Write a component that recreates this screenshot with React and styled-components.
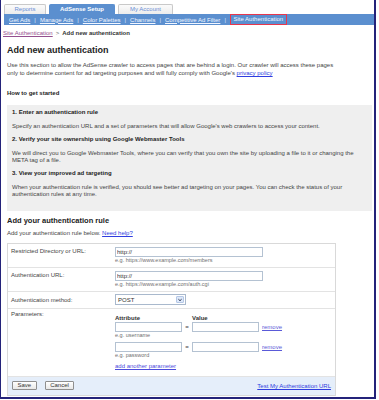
import React from 'react';
import styled, { createGlobalStyle } from 'styled-components';

const subNavItems = ['Get Ads', 'Manage Ads', 'Color Palettes', 'Channels', 'Competitive Ad Filter'];

const steps = [
  {
    title: '1. Enter an authentication rule',
    text: "Specify an authentication URL and a set of parameters that will allow Google's web crawlers to access your content.",
  },
  {
    title: '2. Verify your site ownership using Google Webmaster Tools',
    text: 'We will direct you to Google Webmaster Tools, where you can verify that you own the site by uploading a file to it or changing the META tag of a file.',
  },
  {
    title: '3. View your improved ad targeting',
    text: 'When your authentication rule is verified, you should see better ad targeting on your pages. You can check the status of your authentication rules at any time.',
  },
];

const params = [
  { hint: 'e.g. username' },
  { hint: 'e.g. password' },
];

const App = () => {
  return (
    <>
      <GlobalStyles />
      <Frame>
        <TabStrip>
          <Tab $w={42}>Reports</Tab>
          <Tab $w={66} $active>
            AdSense Setup
          </Tab>
          <Tab $w={55}>My Account</Tab>
        </TabStrip>
        <SubNav>
          {subNavItems.map((item) => (
            <React.Fragment key={item}>
              <SubLink href='#'>{item}</SubLink>
              <Sep>|</Sep>
            </React.Fragment>
          ))}
          <CurrentItem>Site Authentication</CurrentItem>
        </SubNav>

        <Breadcrumb>
          <CrumbLink href='#'>Site Authentication</CrumbLink>
          <CrumbSep>&gt;</CrumbSep>
          <CrumbCurrent>Add new authentication</CrumbCurrent>
        </Breadcrumb>

        <Main>
          <Title>Add new authentication</Title>
          <Intro>
            Use this section to allow the AdSense crawler to access pages that are behind a login.
            Our crawler will access these pages only to determine content for ad targeting purposes
            and will fully comply with Google's <Link href='#'>privacy policy</Link>
          </Intro>

          <SmallHeading>How to get started</SmallHeading>
          <StepsBox>
            {steps.map((step) => (
              <Step key={step.title}>
                <StepTitle>{step.title}</StepTitle>
                <StepText>{step.text}</StepText>
              </Step>
            ))}
          </StepsBox>

          <FormHeading>Add your authentication rule</FormHeading>
          <FormIntro>
            Add your authentication rule below. <Link href='#'>Need help?</Link>
          </FormIntro>

          <FormTable>
            <FormRow $pad={3.5}>
              <Label>Restricted Directory or URL:</Label>
              <Field>
                <TextInput $w={148} defaultValue='http://' />
                <Hint>e.g. https://www.example.com/members</Hint>
              </Field>
            </FormRow>
            <FormRow $pad={3.5}>
              <Label>Authentication URL:</Label>
              <Field>
                <TextInput $w={148} defaultValue='http://' />
                <Hint>e.g. https://www.example.com/auth.cgi</Hint>
              </Field>
            </FormRow>
            <FormRow $pad={2.5}>
              <Label $top={1.5}>Authentication method:</Label>
              <Field>
                <SelectBox>
                  <span>POST</span>
                  <SelectArrow>
                    <svg width='6' height='6' viewBox='0 0 6 6'>
                      <path d='M1.4 2.2 L3 3.7 L4.6 2.2' fill='none' stroke='#2a3550' strokeWidth='1' />
                    </svg>
                  </SelectArrow>
                </SelectBox>
              </Field>
            </FormRow>
            <FormRow $pad={2} $last>
              <Label>Parameters:</Label>
              <ParamField>
                <ParamGrid>
                  <ParamHead>Attribute</ParamHead>
                  <span />
                  <ParamHead>Value</ParamHead>
                  <span />
                  {params.map((p) => (
                    <React.Fragment key={p.hint}>
                      <ParamCell>
                        <TextInput $w={67} />
                        <Hint>{p.hint}</Hint>
                      </ParamCell>
                      <Eq>=</Eq>
                      <ParamCell>
                        <TextInput $w={67} />
                      </ParamCell>
                      <RemoveLink href='#'>remove</RemoveLink>
                    </React.Fragment>
                  ))}
                </ParamGrid>
                <AddLink href='#'>add another parameter</AddLink>
              </ParamField>
            </FormRow>
            <FormFooter>
              <Buttons>
                <Button>Save</Button>
                <Button>Cancel</Button>
              </Buttons>
              <Link href='#'>Test My Authentication URL</Link>
            </FormFooter>
          </FormTable>
        </Main>
      </Frame>
    </>
  );
};

const GlobalStyles = createGlobalStyle`
  html, body {
    margin: 0;
    padding: 0;
    background: #ffffff;
  }

  body {
    font-family: 'Liberation Sans', Arial, sans-serif;
    font-size: 6px;
    color: #444444;
  }
`;

const Frame = styled.div`
  box-sizing: border-box;
  width: 376px;
  height: 399px;
  border-left: 1px solid #24237a;
  border-right: 2px solid #24237a;
  border-bottom: 2px solid #24237a;
  overflow: hidden;
  background: #ffffff;
`;

const TabStrip = styled.div`
  display: flex;
  gap: 3px;
  padding: 4px 0 0 3px;
`;

const Tab = styled.div`
  box-sizing: border-box;
  width: ${(p) => p.$w}px;
  height: 10px;
  text-align: center;
  font-size: 6px;
  line-height: 9px;
  border-radius: 2px 2px 0 0;
  border: 1px solid ${(p) => (p.$active ? '#5b8fcf' : '#c9c9c9')};
  border-bottom: none;
  background: ${(p) => (p.$active ? '#5b8fcf' : 'linear-gradient(#fbfbfb, #ececec)')};
  color: ${(p) => (p.$active ? '#ffffff' : '#6b8fd6')};
  font-weight: ${(p) => (p.$active ? 'bold' : 'normal')};
`;

const SubNav = styled.div`
  display: flex;
  align-items: center;
  height: 11px;
  margin-left: 3px;
  padding-left: 5px;
  background: #5b8fcf;
  color: #eef3ff;
`;

const SubLink = styled.a`
  color: #f2f6ff;
  text-decoration: underline;
  white-space: nowrap;
`;

const Sep = styled.span`
  margin: 0 4px;
  color: #dfe8fb;
`;

const CurrentItem = styled.span`
  box-sizing: border-box;
  height: 11px;
  line-height: 9px;
  padding: 0 2.5px;
  border: 1px solid #e8364c;
  color: #f2f6ff;
  white-space: nowrap;
`;

const Breadcrumb = styled.div`
  margin-top: 4px;
  padding-left: 2px;
  line-height: 8px;
`;

const CrumbLink = styled.a`
  color: #94508f;
  text-decoration: underline;
`;

const CrumbSep = styled.span`
  margin: 0 3px;
  color: #666666;
`;

const CrumbCurrent = styled.span`
  font-weight: bold;
  color: #333333;
`;

const Main = styled.main`
  padding-left: 6px;
`;

const Title = styled.h1`
  margin: 7.5px 0 0 0;
  font-size: 9px;
  line-height: 11px;
  font-weight: bold;
  color: #222222;
`;

const Intro = styled.p`
  max-width: 334px;
  margin: 5px 0 0 0;
  line-height: 8.5px;
  color: #444444;
`;

const Link = styled.a`
  color: #2f3de0;
  text-decoration: underline;
`;

const SmallHeading = styled.h2`
  margin: 11.5px 0 0 0;
  font-size: 6px;
  line-height: 8px;
  font-weight: bold;
  color: #222222;
`;

const StepsBox = styled.div`
  margin: 8px 2px 0 0;
  padding: 4.25px 10px 12px 5px;
  background: #efefef;
`;

const Step = styled.div`
  & + & {
    margin-top: 5px;
  }
`;

const StepTitle = styled.h3`
  margin: 0 0 6.5px 0;
  font-size: 6px;
  line-height: 7.5px;
  font-weight: bold;
  color: #222222;
`;

const StepText = styled.p`
  margin: 0;
  line-height: 7.5px;
  color: #444444;
`;

const FormHeading = styled.h2`
  margin: 5.5px 0 0 0;
  font-size: 7.5px;
  line-height: 9px;
  font-weight: bold;
  color: #222222;
`;

const FormIntro = styled.p`
  margin: 3.5px 0 0 0;
  line-height: 8px;
`;

const FormTable = styled.div`
  box-sizing: border-box;
  width: 329px;
  margin-top: 6px;
  border: 1px solid #d9d9d9;
`;

const FormRow = styled.div`
  display: grid;
  grid-template-columns: 104px 1fr;
  padding: ${(p) => p.$pad}px 3px ${(p) => (p.$last ? 6 : p.$pad)}px 3px;
  border-bottom: 1px solid #e3e3e3;
`;

const Label = styled.div`
  margin-top: ${(p) => (p.$top !== undefined ? p.$top : -0.5)}px;
  line-height: 8px;
  color: #444444;
`;

const Field = styled.div`
  display: flex;
  flex-direction: column;
  align-items: flex-start;
`;

const TextInput = styled.input`
  box-sizing: border-box;
  width: ${(p) => p.$w}px;
  height: 10px;
  margin: 0;
  padding: 0 1px;
  border: 1px solid #b4c2d2;
  font-family: 'Liberation Sans', Arial, sans-serif;
  font-size: 6px;
  color: #333333;
  background: #ffffff;
  outline: none;
`;

const Hint = styled.div`
  font-size: 5.5px;
  line-height: 6px;
  color: #707070;
  white-space: nowrap;
`;

const SelectBox = styled.div`
  box-sizing: border-box;
  display: flex;
  align-items: center;
  justify-content: space-between;
  width: 71px;
  height: 11px;
  padding: 0 1px 0 2px;
  border: 1px solid #a9b9cd;
  background: #ffffff;
  color: #333333;
`;

const SelectArrow = styled.span`
  box-sizing: border-box;
  display: flex;
  align-items: center;
  justify-content: center;
  width: 8px;
  height: 7px;
  border: 1px solid #b4c7e6;
  border-radius: 1px;
  background: #dde8f9;
`;

const ParamField = styled.div`
  padding-top: 3px;
`;

const ParamGrid = styled.div`
  display: grid;
  grid-template-columns: 67px 10px 67px auto;
  row-gap: 4.5px;
  align-items: start;
`;

const ParamHead = styled.div`
  margin-bottom: -4.5px;
  line-height: 8px;
  font-weight: bold;
  color: #333333;
`;

const ParamCell = styled.div`
  display: flex;
  flex-direction: column;
`;

const Eq = styled.span`
  line-height: 10px;
  text-align: center;
  color: #444444;
`;

const RemoveLink = styled.a`
  margin-left: 3px;
  line-height: 10px;
  color: #5a5ad8;
  text-decoration: underline;
`;

const AddLink = styled.a`
  display: inline-block;
  margin-top: 4px;
  line-height: 8px;
  color: #4c4cdc;
  text-decoration: underline;
`;

const FormFooter = styled.div`
  display: flex;
  align-items: center;
  justify-content: space-between;
  height: 18px;
  padding: 0 4px;
  background: #e5eefa;
`;

const Buttons = styled.div`
  display: flex;
  gap: 8px;
  margin-top: -2px;
`;

const Button = styled.button`
  box-sizing: border-box;
  height: 9px;
  margin: 0;
  padding: 0 4.5px;
  border: 1px solid #8f8f8f;
  border-radius: 1px;
  background: linear-gradient(#ffffff, #e8e8e8);
  font-family: 'Liberation Sans', Arial, sans-serif;
  font-size: 6px;
  line-height: 7px;
  color: #333333;
`;

export default App;
